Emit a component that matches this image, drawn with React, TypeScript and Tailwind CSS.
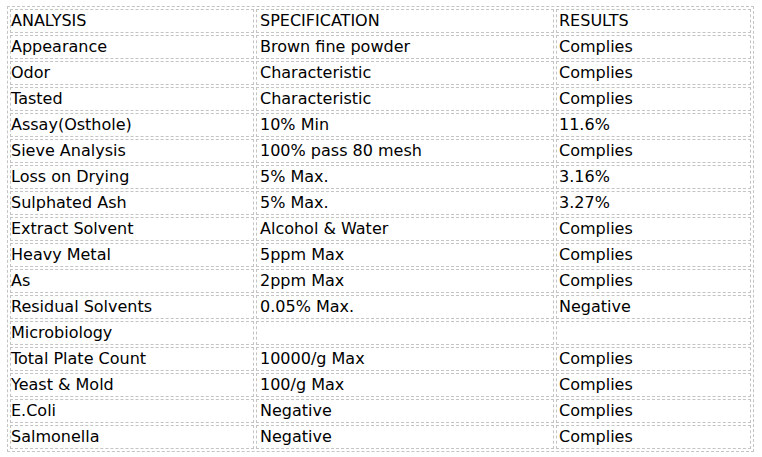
import React from "react";

const rows: [string, string, string][] = [
  ["ANALYSIS", "SPECIFICATION", "RESULTS"],
  ["Appearance", "Brown fine powder", "Complies"],
  ["Odor", "Characteristic", "Complies"],
  ["Tasted", "Characteristic", "Complies"],
  ["Assay(Osthole)", "10% Min", "11.6%"],
  ["Sieve Analysis", "100% pass 80 mesh", "Complies"],
  ["Loss on Drying", "5% Max.", "3.16%"],
  ["Sulphated Ash", "5% Max.", "3.27%"],
  ["Extract Solvent", "Alcohol & Water", "Complies"],
  ["Heavy Metal", "5ppm Max", "Complies"],
  ["As", "2ppm Max", "Complies"],
  ["Residual Solvents", "0.05% Max.", "Negative"],
  ["Microbiology", "", ""],
  ["Total Plate Count", "10000/g Max", "Complies"],
  ["Yeast & Mold", "100/g Max", "Complies"],
  ["E.Coli", "Negative", "Complies"],
  ["Salmonella", "Negative", "Complies"],
];

const pad = ["pl-0", "pl-[3px]", "pl-[2px]"];

export default function App() {
  return (
    <div className="bg-white w-[762px] h-[457px] pl-[7px] pt-[6px]" style={{ fontFamily: '"DejaVu Sans", Verdana, sans-serif' }}>
      <table className="border-separate border-spacing-[2px] border border-dashed border-[#c4c4c4] w-[747px] table-fixed text-[16px] text-black">
        <colgroup>
          <col className="w-[244px]" />
          <col className="w-[298px]" />
          <col />
        </colgroup>
        <tbody>
          {rows.map((r, i) => (
            <tr key={i}>
              {r.map((c, j) => (
                <td key={j} className={`border border-dashed border-[#c4c4c4] h-[24px] ${pad[j]} pr-[2px] py-0 leading-[22px] whitespace-nowrap align-middle`}>
                  {c}
                </td>
              ))}
            </tr>
          ))}
        </tbody>
      </table>
    </div>
  );
}
